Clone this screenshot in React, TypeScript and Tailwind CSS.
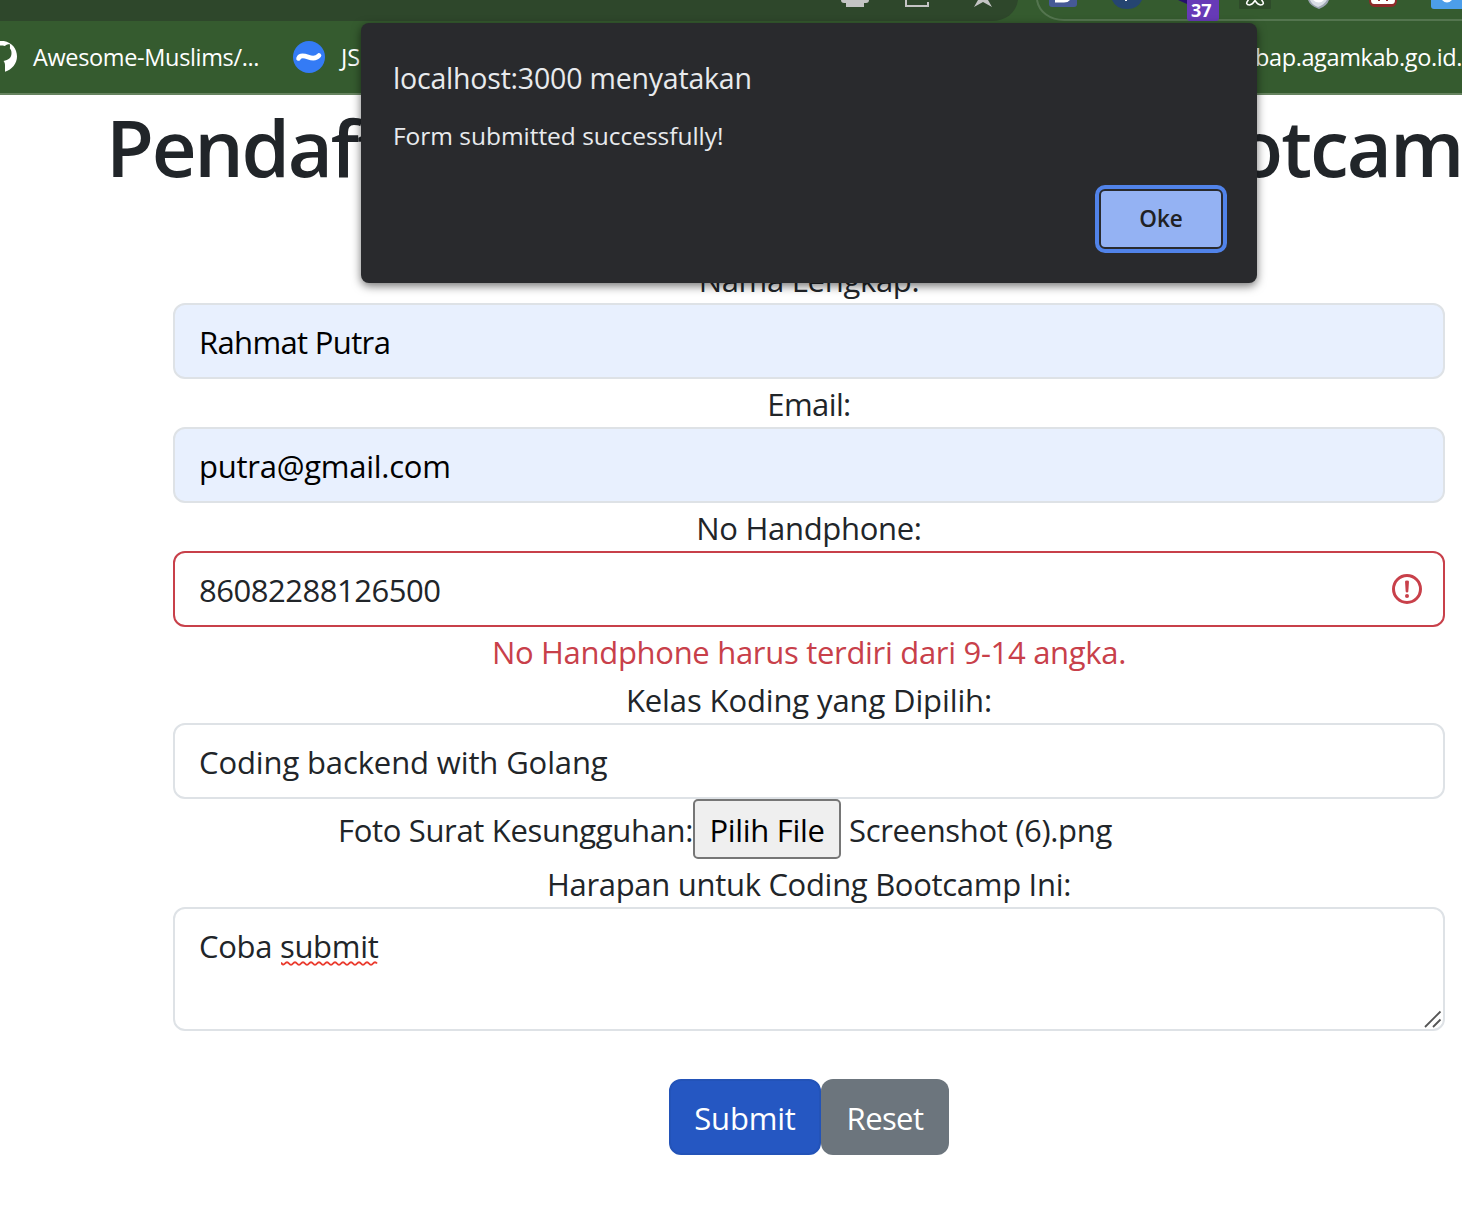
import type { ReactNode } from 'react';

function Label({ children, className = '' }: { children: ReactNode; className?: string }) {
  return (
    <div className={`flex h-12 items-center justify-center pt-[3px] whitespace-nowrap ${className}`}>
      <span>{children}</span>
    </div>
  );
}

function Field({ children, className }: { children: ReactNode; className: string }) {
  return (
    <div className={`flex h-[76px] items-center justify-between rounded-xl border-2 pt-[2px] pr-[21px] pl-6 ${className}`}>
      {children}
    </div>
  );
}

function BrowserBar() {
  return (
    <header className="h-[95px] overflow-hidden border-b-2 border-[#66835f] bg-[#355b2f] text-white">
      <svg className="block h-[22px] w-full" viewBox="0 0 1462 22">
        <path d="M0 0H1018C1016 13 1006 21 991 21H0Z" fill="#2e472b" />
        <g fill="#c4c4c4">
          <path d="M841 0h28c0 2-1 3-3 3H844c-2 0-3-1-3-3Z" />
          <path d="M846 2h18v5H846z" />
          <path d="M974 7 978 0H988L992 7 983 2Z" />
        </g>
        <path d="M906 0V6H928V2" fill="none" stroke="#c4c4c4" strokeWidth="2" />
        <path d="M1037 0C1039 12 1050 20 1064 20H1462" fill="none" stroke="#54754f" strokeWidth="2" />
        <path d="M1049 0h28v4q0 3-3 3h-22q-3 0-3-3Z" fill="#465996" />
        <path d="M1055 0h15q-2 2.500-6 2.500h-9Z" fill="#fff" />
        <path d="M1112 0h30q-4 9-15 9t-15-9Z" fill="#254571" />
        <path d="M1125 0h2v1h-2z" fill="#fff" />
        <path d="M1178 0h9v4Z" fill="#24106c" />
        <rect x="1187" y="-4" width="32" height="25" rx="3" fill="#673ab7" />
        <path d="M1239 0h32v8q0 1-1 1h-30q-1 0-1-1Z" fill="#2e4b2a" />
        <path d="M1248.500 0c-3 3-2 5 1 5 3-.2 4-2 5.500-4.500 1.500 2.500 2.500 4.300 5.500 4.500 3 0 4-2 1-5" fill="none" stroke="#fff" strokeWidth="1.600" />
        <path d="M1308 0h21q-2 6-10 9-9-3-11-9Z" fill="#9da5b2" />
        <path d="M1310 0h17q-3 5-9 7-6-2-8-7Z" fill="#d9dee5" />
        <path d="M1313 0h11q-5 5-11 0Z" fill="#fff" />
        <path d="M1369 0h28q0 7-6 7h-16q-6 0-6-7Z" fill="#8f2929" />
        <path d="M1371 0h24q0 4-3 4h-18q-3 0-3-4Z" fill="#fff" />
        <path d="M1378 0h2v1h-2zM1386 0h2v1h-2z" fill="#8f2929" />
        <path d="M1431 0h31v9h-28q-3 0-3-3Z" fill="#4c9eea" />
        <path d="M1442 0q5 5 10 0Z" fill="#fff" />
        <text x="1191" y="17" fill="#fff" fontFamily="Open Sans" fontWeight="700" fontSize="18">37</text>
      </svg>
      <div className="flex h-[70px] items-center text-[23.5px]">
        <svg className="h-8 w-[17px] shrink-0" viewBox="15 0 17 32">
          <path d="M15 .2C25 0 32 7 32 16c0 7-5 13-12 15.200V25c0-2-.5-3.500-1.500-4.500 5-1 8-3 8-8 0-2-.7-3.500-1.700-4.700.3-1 .3-3-.2-4.200-1.500 0-3 .7-4.700 1.900-2-.6-4-.6-5.400-.5Z" transform="translate(0 -0.500)" fill="#fff" />
        </svg>
        <span className="ml-4 w-[260px] shrink-0 pt-px tracking-[-0.35px] whitespace-nowrap">Awesome-Muslims/...</span>
        <svg className="h-8 w-8 shrink-0" viewBox="0 0 32 32">
          <circle cx="16" cy="16" r="16" fill="#347bf5" />
          <path d="M5.500 17.500C7 13.500 11 14.500 15 16s8 2 11-1.500" fill="none" stroke="#fff" strokeWidth="4.600" strokeLinecap="round" />
        </svg>
        <span className="ml-4 shrink-0 pt-px">JS</span>
        <span className="ml-auto pt-px tracking-[-0.4px] whitespace-nowrap">bap.agamkab.go.id.</span>
      </div>
    </header>
  );
}

function AlertDialog() {
  return (
    <div className="absolute top-[23px] left-[361px] flex h-[260px] w-[896px] flex-col rounded-lg bg-[#292a2d] pt-[31px] pr-[30px] pl-8 text-[#e8eaed] shadow-[0_3px_10px_rgba(0,0,0,0.55)]">
      <div className="flex h-12 items-center text-[28.5px] tracking-[-0.2px]"><span>localhost:3000 menyatakan</span></div>
      <div className="mt-4 flex h-9 items-center text-[24.5px] tracking-[-0.03px]"><span>Form submitted successfully!</span></div>
      <button className="mt-[31px] flex h-[68px] w-[132px] items-center justify-center self-end rounded-[10px] border-4 border-[#5183e9] bg-[#292a2d] p-[2px]">
        <span className="flex h-full w-full items-center justify-center rounded-[4px] bg-[#94b2f3] text-[22.5px] font-semibold text-[#202124]">Oke</span>
      </button>
    </div>
  );
}

export default function App() {
  return (
    <div className="relative h-[1221px] w-[1462px] overflow-hidden bg-white font-['Open_Sans',sans-serif] text-[31px] leading-none text-[#212529]">
      <BrowserBar />
      <main className="flex flex-col">
        <h1 className="flex h-[160px] justify-between pt-[12px] pl-[106px] text-[78px] leading-[80px] font-semibold whitespace-nowrap">
          <span className="tracking-[-2.3px]">Pendaft</span>
          <span className="mr-[-47px] tracking-[-2px]">otcamp</span>
        </h1>
        <form className="ml-[173px] w-[1272px]">
          <Label className="tracking-[-0.3px]">Nama Lengkap:</Label>
          <Field className="border-[#dee2e6] bg-[#e8f0fe] tracking-[-0.65px] text-black"><span>Rahmat Putra</span></Field>
          <Label className="tracking-[-0.6px]">Email:</Label>
          <Field className="border-[#dee2e6] bg-[#e8f0fe] tracking-[-0.25px] text-black"><span>putra@gmail.com</span></Field>
          <Label className="tracking-[-0.3px]">No Handphone:</Label>
          <Field className="border-[#c8404a] tracking-[-0.47px]">
            <span>86082288126500</span>
            <svg className="-mt-[2px] h-[30px] w-[30px]" viewBox="0 0 30 30" fill="#c8404a">
              <circle cx="15" cy="15" r="13.500" fill="none" stroke="#c8404a" strokeWidth="3" />
              <path d="M13 7.500Q13 6.500 15 6.500t2 1l-.7 10q-.1 1-1.300 1t-1.300-1Z" />
              <circle cx="15" cy="22" r="2" />
            </svg>
          </Field>
          <Label className="tracking-[-0.3px] text-[#c8404a]">No Handphone harus terdiri dari 9-14 angka.</Label>
          <Label className="tracking-[-0.12px]">Kelas Koding yang Dipilih:</Label>
          <Field className="border-[#dee2e6] tracking-[-0.12px]"><span>Coding backend with Golang</span></Field>
          <div className="flex h-[60px] items-center pl-[165px] tracking-[-0.33px] whitespace-nowrap">
            <span className="w-[355px] pt-[3px]">Foto Surat Kesungguhan:</span>
            <span className="flex h-[60px] w-[148px] items-center justify-center rounded-[5px] border-2 border-[#767676] bg-[#efefef] pt-[3px] text-black"><span>Pilih File</span></span>
            <span className="ml-2 pt-[3px]">Screenshot (6).png</span>
          </div>
          <Label className="tracking-[-0.3px]">Harapan untuk Coding Bootcamp Ini:</Label>
          <div className="relative h-[124px] rounded-xl border-2 border-[#dee2e6] px-6 pt-[22px] tracking-[-0.3px]">
            <span>Coba </span>
            <span className="relative inline-block">
              submit
              <svg className="absolute top-[30px] left-px h-[6px] w-[97px]" viewBox="0 0 97 6">
                <path d="M0 2q1.500 0 3 1t3 0 3-1 3 1 3 0 3-1 3 1 3 0 3-1 3 1 3 0 3-1 3 1 3 0 3-1 3 1 3 0 3-1 3 1 3 0 3-1 3 1 3 0 3-1 3 1 3 0 3-1 3 1 3 0 3-1 3 1 3 0" fill="none" stroke="none" />
                <path d="M0 2q2 3.500 4 1t4 0 4 0 4 0 4 0 4 0 4 0 4 0 4 0 4 0 4 0 4 0 4 0 4 0 4 0 4 0 4 0 4 0 4 0 4 0 4 0 4 0 4 0 4 0" transform="translate(0 -0.500)" fill="none" stroke="#ea3b2e" strokeWidth="1.900" />
              </svg>
            </span>
            <svg className="absolute right-0 bottom-0 h-[20px] w-[20px]" viewBox="0 0 20 20" stroke="#555" strokeWidth="1.800">
              <path d="M2 18 17.500 2.500M10 18 17.500 10.500" />
            </svg>
          </div>
          <div className="mt-12 flex justify-center text-white">
            <button type="button" className="flex h-[76px] w-[152px] items-center justify-center rounded-xl border-2 border-[#2353b8] bg-[#2557c2] pt-[2px] tracking-[-0.2px]"><span>Submit</span></button>
            <button type="button" className="flex h-[76px] w-[128px] items-center justify-center rounded-xl bg-[#6c757d] pt-[2px] tracking-[-0.6px]"><span>Reset</span></button>
          </div>
        </form>
      </main>
      <AlertDialog />
    </div>
  );
}
